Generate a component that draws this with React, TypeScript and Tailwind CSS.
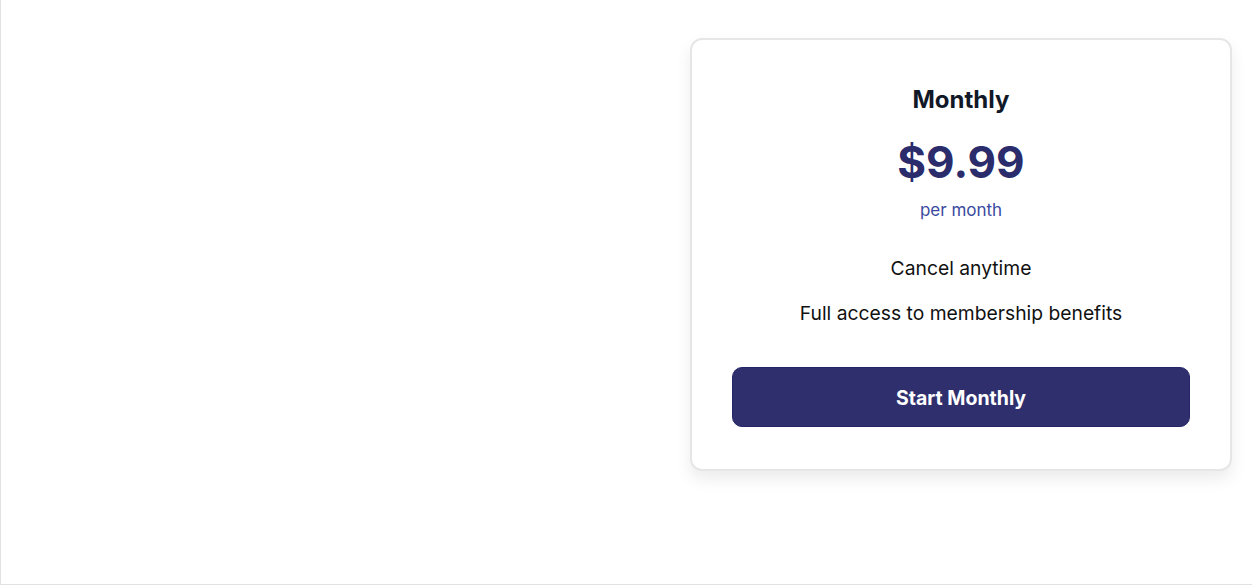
export default function App() {
  return (
    <div
      className="h-[585px] w-full border-l border-b border-[#e2e2e2] bg-white"
      style={{ fontFamily: "Inter, 'Noto Sans', sans-serif" }}
    >
      <div className="flex justify-end pr-[20px] pt-[38px]">
        <div className="w-[542px] rounded-[12px] border-2 border-[#e6e6e6] bg-white px-[40px] pt-[44px] pb-[42px] text-center shadow-[0_8px_16px_rgba(0,0,0,0.08)]">
          <h2 className="text-[24px] font-bold leading-[32px] text-[#111827]">Monthly</h2>
          <div className="mt-[22px] text-[44px] font-bold leading-[48px] text-[#2b2c6b]">$9.99</div>
          <div className="mt-[12px] text-[17px] leading-[24px] text-[#3a4a9e]">per month</div>
          <div className="mt-[34px] flex flex-col gap-[21px] text-[19.3px] leading-[24px] text-[#111111]">
            <p>Cancel anytime</p>
            <p>Full access to membership benefits</p>
          </div>
          <button className="mt-[42px] h-[60px] w-full rounded-[10px] border border-[#25266a] bg-[#2f2f6e] pt-[3px] text-[19.5px] font-bold text-white">
            Start Monthly
          </button>
        </div>
      </div>
    </div>
  );
}
